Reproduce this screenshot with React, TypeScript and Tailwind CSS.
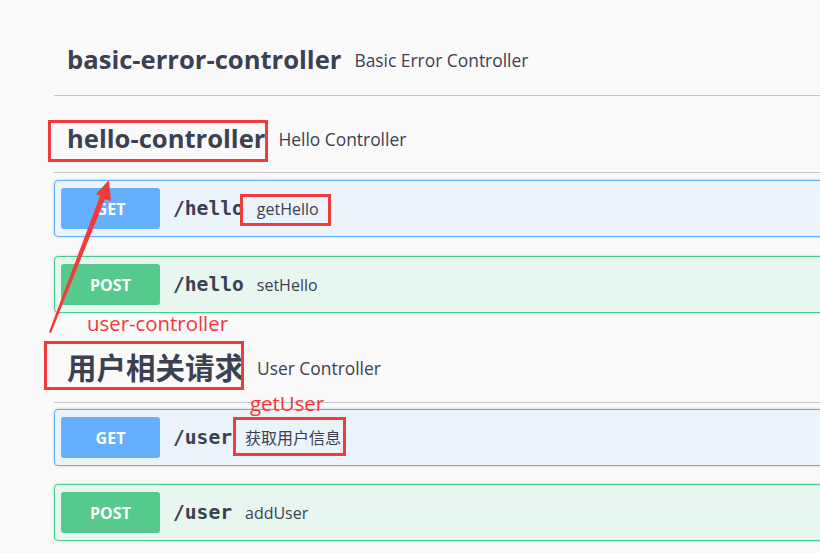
const RED = "#f23b3b";

type Op = { method: "GET" | "POST"; path: string; summary: string; mt: string };

function TagHeader({ title, desc, cjk, className }: { title: string; desc: string; cjk?: boolean; className?: string }) {
  return (
    <div className={`flex h-[66px] items-center border-b border-[#c6c7cb] pl-[13px] ${className ?? ""}`}>
      <span
        className={`font-bold text-[#3b4151] ${
          cjk ? "mb-[7px] text-[29.5px] font-['Noto_Sans_CJK_SC',sans-serif]" : "text-[25.6px]"
        }`}
      >
        {title}
      </span>
      <span className={`ml-[13px] text-[17.4px] text-[#3b4151] ${cjk ? "mb-[3px]" : ""}`}>{desc}</span>
    </div>
  );
}

function OpBlock({ op }: { op: Op }) {
  const get = op.method === "GET";
  return (
    <div
      className={`flex h-[57px] items-center rounded-[4px] border shadow-[0_0_3px_rgba(0,0,0,0.19)] ${op.mt} ${
        get ? "border-[#61affe] bg-[#ebf3fb]" : "border-[#49cc90] bg-[#e8f6f0]"
      }`}
    >
      <div
        className={`ml-[6px] flex h-[41px] w-[99px] items-center justify-center rounded-[3px] text-[16px] font-bold text-white ${
          get ? "bg-[#66affe]" : "bg-[#56ca8c]"
        }`}
      >
        {op.method}
      </div>
      <span className="ml-[13px] font-['DejaVu_Sans_Mono',monospace] text-[19.6px] font-bold text-[#3b4151]">
        {op.path}
      </span>
      <span className="ml-[13px] font-['Open_Sans','Noto_Sans_CJK_SC',sans-serif] text-[16px] text-[#3b4151]">
        {op.summary}
      </span>
    </div>
  );
}

export default function App() {
  return (
    <div className="relative h-[553px] w-[820px] overflow-hidden bg-[#fafafa] font-['Open_Sans','Noto_Sans_CJK_SC',sans-serif]">
      <div className="ml-[54px] w-[800px] pt-[30px]">
        <TagHeader title="basic-error-controller" desc="Basic Error Controller" className="pb-[4px]" />

        <TagHeader title="hello-controller" desc="Hello Controller" className="mt-[11px]" />
        <OpBlock op={{ method: "GET", path: "/hello", summary: "getHello", mt: "mt-[7px]" }} />
        <OpBlock op={{ method: "POST", path: "/hello", summary: "setHello", mt: "mt-[19px]" }} />

        <TagHeader title="用户相关请求" desc="User Controller" cjk className="mt-[24px]" />
        <OpBlock op={{ method: "GET", path: "/user", summary: "获取用户信息", mt: "mt-[6px]" }} />
        <OpBlock op={{ method: "POST", path: "/user", summary: "addUser", mt: "mt-[18px]" }} />
      </div>

      {/* red annotations drawn on top of the screenshot */}
      <div className="absolute left-[48px] top-[120px] h-[42px] w-[220px] border-[3px] border-[#f23b3b]" />
      <div className="absolute left-[240px] top-[194px] h-[32px] w-[91px] border-[3px] border-[#f23b3b]" />
      <div className="absolute left-[44px] top-[341px] h-[49px] w-[200px] border-[3px] border-[#f23b3b]" />
      <div className="absolute left-[233px] top-[417px] h-[39px] w-[113px] border-[3px] border-[#f23b3b]" />

      <span className="absolute left-[87px] top-[309px] text-[20.4px] leading-[28px] text-[#f5363a]">user-controller</span>
      <span className="absolute left-[250px] top-[389px] text-[20.4px] leading-[28px] text-[#f5363a]">getUser</span>

      <svg className="absolute left-0 top-0" width="820" height="553" aria-hidden="true">
        <polygon points="109,180 111,201 105,199 51,333 49,332 100,196 96,194" fill={RED} />
      </svg>
    </div>
  );
}
